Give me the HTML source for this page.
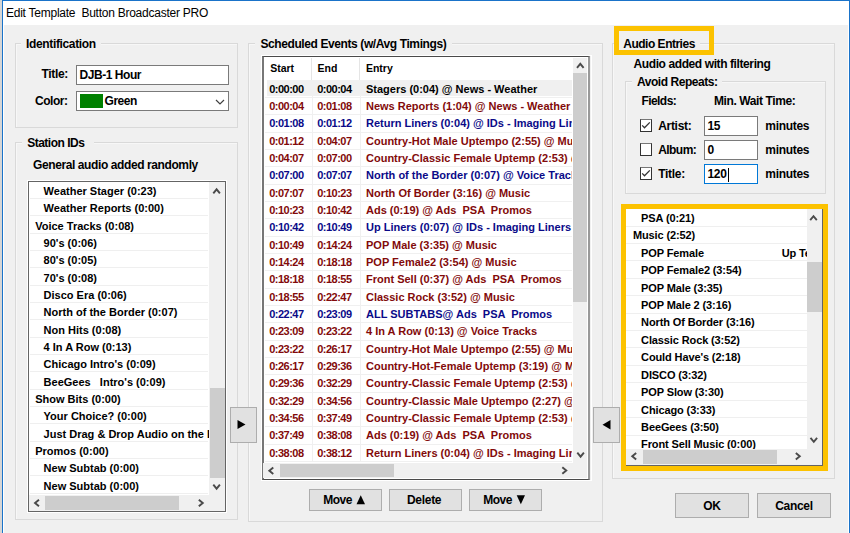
<!DOCTYPE html><html><head><meta charset="utf-8"><style>
html,body{margin:0;padding:0;}
body{width:850px;height:533px;position:relative;overflow:hidden;background:#f0f0f0;font-family:"Liberation Sans",sans-serif;}
.t{position:absolute;white-space:pre;}
div{box-sizing:border-box;}
</style></head><body>
<div style="position:absolute;left:0px;top:0px;width:2px;height:533px;background:#d6d6d6"></div>
<div style="position:absolute;left:2px;top:0px;width:848px;height:533px;background:#1a73c9"></div>
<div style="position:absolute;left:3px;top:1px;width:846px;height:533px;background:#ffffff"></div>
<div style="position:absolute;left:4px;top:25px;width:844px;height:508px;background:#f0f0f0"></div>
<div class="t" style="left:6px;top:6.64px;font-size:12px;line-height:12px;font-weight:normal;color:#000;letter-spacing:-0.25px;">Edit Template  Button Broadcaster PRO</div>
<div style="position:absolute;left:15px;top:43px;width:223px;height:85px;border:1px solid #d9d9d9;box-shadow:inset 1px 1px 0 #f7f7f7;box-sizing:border-box"></div>
<div style="position:absolute;left:21px;top:36px;width:80px;height:12px;background:#f0f0f0"></div>
<div class="t" style="left:26px;top:38.04px;font-size:12px;line-height:12px;font-weight:bold;color:#000;letter-spacing:-0.35px;">Identification</div>
<div class="t" style="left:41.4px;top:68.44px;font-size:12px;line-height:12px;font-weight:bold;color:#000;letter-spacing:-0.3px;">Title:</div>
<div class="t" style="left:35.0px;top:95.14px;font-size:12px;line-height:12px;font-weight:bold;color:#000;letter-spacing:-0.45px;">Color:</div>
<div style="position:absolute;left:76px;top:65px;width:153px;height:20px;background:#fff;border:1px solid #7a7a7a"></div>
<div class="t" style="left:79.5px;top:69.04px;font-size:12px;line-height:12px;font-weight:bold;color:#000;letter-spacing:-0.45px;">DJB-1 Hour</div>
<div style="position:absolute;left:76px;top:91px;width:153px;height:20px;background:#fff;border:1px solid #7a7a7a"></div>
<div style="position:absolute;left:80px;top:94px;width:23px;height:14px;background:#008000"></div>
<div class="t" style="left:104.5px;top:95.04px;font-size:12px;line-height:12px;font-weight:bold;color:#000;letter-spacing:-0.45px;">Green</div>
<svg style="position:absolute;left:0;top:0;overflow:visible" width="1" height="1"><polyline points="216,100 220,104 224,100" fill="none" stroke="#404040" stroke-width="1.2"/></svg>
<div style="position:absolute;left:15px;top:142px;width:223px;height:378px;border:1px solid #d9d9d9;box-shadow:inset 1px 1px 0 #f7f7f7;box-sizing:border-box"></div>
<div style="position:absolute;left:22px;top:134px;width:72px;height:14px;background:#f0f0f0"></div>
<div class="t" style="left:27.2px;top:136.64px;font-size:12px;line-height:12px;font-weight:bold;color:#000;letter-spacing:-0.5px;">Station IDs</div>
<div class="t" style="left:33px;top:158.54px;font-size:12px;line-height:12px;font-weight:bold;color:#000;letter-spacing:-0.4px;">General audio added randomly</div>
<div style="position:absolute;left:27px;top:180px;width:200px;height:333px;border:1px solid #fff"></div>
<div style="position:absolute;left:28px;top:181px;width:198px;height:331px;background:#fff;border:1px solid #646464"></div>
<div style="position:absolute;left:29px;top:182px;width:180px;height:313px;overflow:hidden">
<div style="position:absolute;left:1px;top:15.93px;width:178px;height:1px;background:#efefef"></div>
<div class="t" style="left:14.600000000000001px;top:4.08px;font-size:11px;line-height:11px;font-weight:bold;color:#000">Weather Stager (0:23)</div>
<div style="position:absolute;left:1px;top:33.26px;width:178px;height:1px;background:#efefef"></div>
<div class="t" style="left:14.600000000000001px;top:21.41px;font-size:11px;line-height:11px;font-weight:bold;color:#000">Weather Reports (0:00)</div>
<div style="position:absolute;left:1px;top:50.59px;width:178px;height:1px;background:#efefef"></div>
<div class="t" style="left:6.200000000000003px;top:38.74px;font-size:11px;line-height:11px;font-weight:bold;color:#000">Voice Tracks (0:08)</div>
<div style="position:absolute;left:1px;top:67.92px;width:178px;height:1px;background:#efefef"></div>
<div class="t" style="left:14.600000000000001px;top:56.07px;font-size:11px;line-height:11px;font-weight:bold;color:#000">90&#x27;s (0:06)</div>
<div style="position:absolute;left:1px;top:85.25px;width:178px;height:1px;background:#efefef"></div>
<div class="t" style="left:14.600000000000001px;top:73.40px;font-size:11px;line-height:11px;font-weight:bold;color:#000">80&#x27;s (0:05)</div>
<div style="position:absolute;left:1px;top:102.58px;width:178px;height:1px;background:#efefef"></div>
<div class="t" style="left:14.600000000000001px;top:90.73px;font-size:11px;line-height:11px;font-weight:bold;color:#000">70&#x27;s (0:08)</div>
<div style="position:absolute;left:1px;top:119.91px;width:178px;height:1px;background:#efefef"></div>
<div class="t" style="left:14.600000000000001px;top:108.06px;font-size:11px;line-height:11px;font-weight:bold;color:#000">Disco Era (0:06)</div>
<div style="position:absolute;left:1px;top:137.24px;width:178px;height:1px;background:#efefef"></div>
<div class="t" style="left:14.600000000000001px;top:125.39px;font-size:11px;line-height:11px;font-weight:bold;color:#000">North of the Border (0:07)</div>
<div style="position:absolute;left:1px;top:154.57px;width:178px;height:1px;background:#efefef"></div>
<div class="t" style="left:14.600000000000001px;top:142.72px;font-size:11px;line-height:11px;font-weight:bold;color:#000">Non Hits (0:08)</div>
<div style="position:absolute;left:1px;top:171.90px;width:178px;height:1px;background:#efefef"></div>
<div class="t" style="left:14.600000000000001px;top:160.05px;font-size:11px;line-height:11px;font-weight:bold;color:#000">4 In A Row (0:13)</div>
<div style="position:absolute;left:1px;top:189.23px;width:178px;height:1px;background:#efefef"></div>
<div class="t" style="left:14.600000000000001px;top:177.38px;font-size:11px;line-height:11px;font-weight:bold;color:#000">Chicago Intro&#x27;s (0:09)</div>
<div style="position:absolute;left:1px;top:206.56px;width:178px;height:1px;background:#efefef"></div>
<div class="t" style="left:14.600000000000001px;top:194.71px;font-size:11px;line-height:11px;font-weight:bold;color:#000">BeeGees   Intro&#x27;s (0:09)</div>
<div style="position:absolute;left:1px;top:223.89px;width:178px;height:1px;background:#efefef"></div>
<div class="t" style="left:6.200000000000003px;top:212.04px;font-size:11px;line-height:11px;font-weight:bold;color:#000">Show Bits (0:00)</div>
<div style="position:absolute;left:1px;top:241.22px;width:178px;height:1px;background:#efefef"></div>
<div class="t" style="left:14.600000000000001px;top:229.37px;font-size:11px;line-height:11px;font-weight:bold;color:#000">Your Choice? (0:00)</div>
<div style="position:absolute;left:1px;top:258.55px;width:178px;height:1px;background:#efefef"></div>
<div class="t" style="left:14.600000000000001px;top:246.70px;font-size:11px;line-height:11px;font-weight:bold;color:#000">Just Drag &amp; Drop Audio on the Board</div>
<div style="position:absolute;left:1px;top:275.88px;width:178px;height:1px;background:#efefef"></div>
<div class="t" style="left:6.200000000000003px;top:264.03px;font-size:11px;line-height:11px;font-weight:bold;color:#000">Promos (0:00)</div>
<div style="position:absolute;left:1px;top:293.21px;width:178px;height:1px;background:#efefef"></div>
<div class="t" style="left:14.600000000000001px;top:281.36px;font-size:11px;line-height:11px;font-weight:bold;color:#000">New Subtab (0:00)</div>
<div style="position:absolute;left:1px;top:310.54px;width:178px;height:1px;background:#efefef"></div>
<div class="t" style="left:14.600000000000001px;top:298.69px;font-size:11px;line-height:11px;font-weight:bold;color:#000">New Subtab (0:00)</div>
</div>
<div style="position:absolute;left:209px;top:182px;width:16px;height:313px;background:#f0f0f0"></div>
<div style="position:absolute;left:209.5px;top:388.3px;width:15px;height:89.5px;background:#cdcdcd"></div>
<svg style="position:absolute;left:0;top:0;overflow:visible" width="1" height="1"><polyline points="213.29999999999998,193.28 216.6,189.32000000000002 219.9,193.28" fill="none" stroke="#4a4a4a" stroke-width="1.9"/></svg>
<svg style="position:absolute;left:0;top:0;overflow:visible" width="1" height="1"><polyline points="213.29999999999998,484.71999999999997 216.6,488.68 219.9,484.71999999999997" fill="none" stroke="#4a4a4a" stroke-width="1.9"/></svg>
<div style="position:absolute;left:29px;top:495px;width:180px;height:16px;background:#f0f0f0"></div>
<div style="position:absolute;left:45.3px;top:496px;width:134px;height:14px;background:#cdcdcd"></div>
<svg style="position:absolute;left:0;top:0;overflow:visible" width="1" height="1"><polyline points="38.98,499.7 35.02,503 38.98,506.3" fill="none" stroke="#4a4a4a" stroke-width="1.9"/></svg>
<svg style="position:absolute;left:0;top:0;overflow:visible" width="1" height="1"><polyline points="198.82000000000002,499.7 202.78,503 198.82000000000002,506.3" fill="none" stroke="#4a4a4a" stroke-width="1.9"/></svg>
<div style="position:absolute;left:209px;top:495px;width:16px;height:16px;background:#f0f0f0"></div>
<div style="position:absolute;left:248px;top:43px;width:355px;height:479px;border:1px solid #d9d9d9;box-shadow:inset 1px 1px 0 #f7f7f7;box-sizing:border-box"></div>
<div style="position:absolute;left:255px;top:36px;width:197px;height:14px;background:#f0f0f0"></div>
<div class="t" style="left:260.4px;top:38.24px;font-size:12px;line-height:12px;font-weight:bold;color:#000;letter-spacing:-0.4px;">Scheduled Events (w/Avg Timings)</div>
<div style="position:absolute;left:261px;top:55px;width:331px;height:426px;border:1px solid #fff"></div>
<div style="position:absolute;left:262px;top:56px;width:328px;height:424px;background:#fff;border-top:1px solid #4a4a4a;border-bottom:1px solid #4a4a4a;border-left:2px solid #777;border-right:2px solid #999"></div>
<div class="t" style="left:270.2px;top:63.21px;font-size:10.5px;line-height:10.5px;font-weight:bold;color:#000;letter-spacing:0px;">Start</div>
<div class="t" style="left:317.6px;top:63.21px;font-size:10.5px;line-height:10.5px;font-weight:bold;color:#000;letter-spacing:0px;">End</div>
<div class="t" style="left:365.9px;top:63.21px;font-size:10.5px;line-height:10.5px;font-weight:bold;color:#000;letter-spacing:0px;">Entry</div>
<div style="position:absolute;left:311px;top:58px;width:1px;height:22px;background:#e5e5e5"></div>
<div style="position:absolute;left:359px;top:58px;width:1px;height:22px;background:#e5e5e5"></div>
<div style="position:absolute;left:263px;top:80px;width:309px;height:382.6px;overflow:hidden">
<div style="position:absolute;left:4px;top:0.10px;width:306px;height:16px;background:#f0f0f0"></div>
<div style="position:absolute;left:2px;top:16.93px;width:308px;height:1px;background:#f0f0f0"></div>
<div style="position:absolute;left:49px;top:0.10px;width:1px;height:17.33px;background:#f0f0f0"></div>
<div style="position:absolute;left:97px;top:0.10px;width:1px;height:17.33px;background:#f0f0f0"></div>
<div class="t" style="left:6.199999999999989px;top:3.78px;font-size:11px;line-height:11px;font-weight:bold;color:#000;letter-spacing:-0.5px">0:00:00</div>
<div class="t" style="left:54.19999999999999px;top:3.78px;font-size:11px;line-height:11px;font-weight:bold;color:#000;letter-spacing:-0.5px">0:00:04</div>
<div class="t" style="left:103px;top:3.78px;font-size:11px;line-height:11px;font-weight:bold;color:#000">Stagers (0:04) @ News - Weather</div>
<div style="position:absolute;left:2px;top:34.26px;width:308px;height:1px;background:#f0f0f0"></div>
<div style="position:absolute;left:49px;top:17.43px;width:1px;height:17.33px;background:#f0f0f0"></div>
<div style="position:absolute;left:97px;top:17.43px;width:1px;height:17.33px;background:#f0f0f0"></div>
<div class="t" style="left:6.199999999999989px;top:21.11px;font-size:11px;line-height:11px;font-weight:bold;color:#820a0a;letter-spacing:-0.5px">0:00:04</div>
<div class="t" style="left:54.19999999999999px;top:21.11px;font-size:11px;line-height:11px;font-weight:bold;color:#820a0a;letter-spacing:-0.5px">0:01:08</div>
<div class="t" style="left:103px;top:21.11px;font-size:11px;line-height:11px;font-weight:bold;color:#820a0a">News Reports (1:04) @ News - Weather</div>
<div style="position:absolute;left:2px;top:51.59px;width:308px;height:1px;background:#f0f0f0"></div>
<div style="position:absolute;left:49px;top:34.76px;width:1px;height:17.33px;background:#f0f0f0"></div>
<div style="position:absolute;left:97px;top:34.76px;width:1px;height:17.33px;background:#f0f0f0"></div>
<div class="t" style="left:6.199999999999989px;top:38.44px;font-size:11px;line-height:11px;font-weight:bold;color:#0a0a88;letter-spacing:-0.5px">0:01:08</div>
<div class="t" style="left:54.19999999999999px;top:38.44px;font-size:11px;line-height:11px;font-weight:bold;color:#0a0a88;letter-spacing:-0.5px">0:01:12</div>
<div class="t" style="left:103px;top:38.44px;font-size:11px;line-height:11px;font-weight:bold;color:#0a0a88">Return Liners (0:04) @ IDs - Imaging Liners</div>
<div style="position:absolute;left:2px;top:68.92px;width:308px;height:1px;background:#f0f0f0"></div>
<div style="position:absolute;left:49px;top:52.09px;width:1px;height:17.33px;background:#f0f0f0"></div>
<div style="position:absolute;left:97px;top:52.09px;width:1px;height:17.33px;background:#f0f0f0"></div>
<div class="t" style="left:6.199999999999989px;top:55.77px;font-size:11px;line-height:11px;font-weight:bold;color:#820a0a;letter-spacing:-0.5px">0:01:12</div>
<div class="t" style="left:54.19999999999999px;top:55.77px;font-size:11px;line-height:11px;font-weight:bold;color:#820a0a;letter-spacing:-0.5px">0:04:07</div>
<div class="t" style="left:103px;top:55.77px;font-size:11px;line-height:11px;font-weight:bold;color:#820a0a">Country-Hot Male Uptempo (2:55) @ Music</div>
<div style="position:absolute;left:2px;top:86.25px;width:308px;height:1px;background:#f0f0f0"></div>
<div style="position:absolute;left:49px;top:69.42px;width:1px;height:17.33px;background:#f0f0f0"></div>
<div style="position:absolute;left:97px;top:69.42px;width:1px;height:17.33px;background:#f0f0f0"></div>
<div class="t" style="left:6.199999999999989px;top:73.10px;font-size:11px;line-height:11px;font-weight:bold;color:#820a0a;letter-spacing:-0.5px">0:04:07</div>
<div class="t" style="left:54.19999999999999px;top:73.10px;font-size:11px;line-height:11px;font-weight:bold;color:#820a0a;letter-spacing:-0.5px">0:07:00</div>
<div class="t" style="left:103px;top:73.10px;font-size:11px;line-height:11px;font-weight:bold;color:#820a0a">Country-Classic Female Uptemp (2:53) @ Music</div>
<div style="position:absolute;left:2px;top:103.58px;width:308px;height:1px;background:#f0f0f0"></div>
<div style="position:absolute;left:49px;top:86.75px;width:1px;height:17.33px;background:#f0f0f0"></div>
<div style="position:absolute;left:97px;top:86.75px;width:1px;height:17.33px;background:#f0f0f0"></div>
<div class="t" style="left:6.199999999999989px;top:90.43px;font-size:11px;line-height:11px;font-weight:bold;color:#0a0a88;letter-spacing:-0.5px">0:07:00</div>
<div class="t" style="left:54.19999999999999px;top:90.43px;font-size:11px;line-height:11px;font-weight:bold;color:#0a0a88;letter-spacing:-0.5px">0:07:07</div>
<div class="t" style="left:103px;top:90.43px;font-size:11px;line-height:11px;font-weight:bold;color:#0a0a88">North of the Border (0:07) @ Voice Tracks</div>
<div style="position:absolute;left:2px;top:120.91px;width:308px;height:1px;background:#f0f0f0"></div>
<div style="position:absolute;left:49px;top:104.08px;width:1px;height:17.33px;background:#f0f0f0"></div>
<div style="position:absolute;left:97px;top:104.08px;width:1px;height:17.33px;background:#f0f0f0"></div>
<div class="t" style="left:6.199999999999989px;top:107.76px;font-size:11px;line-height:11px;font-weight:bold;color:#820a0a;letter-spacing:-0.5px">0:07:07</div>
<div class="t" style="left:54.19999999999999px;top:107.76px;font-size:11px;line-height:11px;font-weight:bold;color:#820a0a;letter-spacing:-0.5px">0:10:23</div>
<div class="t" style="left:103px;top:107.76px;font-size:11px;line-height:11px;font-weight:bold;color:#820a0a">North Of Border (3:16) @ Music</div>
<div style="position:absolute;left:2px;top:138.24px;width:308px;height:1px;background:#f0f0f0"></div>
<div style="position:absolute;left:49px;top:121.41px;width:1px;height:17.33px;background:#f0f0f0"></div>
<div style="position:absolute;left:97px;top:121.41px;width:1px;height:17.33px;background:#f0f0f0"></div>
<div class="t" style="left:6.199999999999989px;top:125.09px;font-size:11px;line-height:11px;font-weight:bold;color:#820a0a;letter-spacing:-0.5px">0:10:23</div>
<div class="t" style="left:54.19999999999999px;top:125.09px;font-size:11px;line-height:11px;font-weight:bold;color:#820a0a;letter-spacing:-0.5px">0:10:42</div>
<div class="t" style="left:103px;top:125.09px;font-size:11px;line-height:11px;font-weight:bold;color:#820a0a">Ads (0:19) @ Ads  PSA  Promos</div>
<div style="position:absolute;left:2px;top:155.57px;width:308px;height:1px;background:#f0f0f0"></div>
<div style="position:absolute;left:49px;top:138.74px;width:1px;height:17.33px;background:#f0f0f0"></div>
<div style="position:absolute;left:97px;top:138.74px;width:1px;height:17.33px;background:#f0f0f0"></div>
<div class="t" style="left:6.199999999999989px;top:142.42px;font-size:11px;line-height:11px;font-weight:bold;color:#0a0a88;letter-spacing:-0.5px">0:10:42</div>
<div class="t" style="left:54.19999999999999px;top:142.42px;font-size:11px;line-height:11px;font-weight:bold;color:#0a0a88;letter-spacing:-0.5px">0:10:49</div>
<div class="t" style="left:103px;top:142.42px;font-size:11px;line-height:11px;font-weight:bold;color:#0a0a88">Up Liners (0:07) @ IDs - Imaging Liners</div>
<div style="position:absolute;left:2px;top:172.90px;width:308px;height:1px;background:#f0f0f0"></div>
<div style="position:absolute;left:49px;top:156.07px;width:1px;height:17.33px;background:#f0f0f0"></div>
<div style="position:absolute;left:97px;top:156.07px;width:1px;height:17.33px;background:#f0f0f0"></div>
<div class="t" style="left:6.199999999999989px;top:159.75px;font-size:11px;line-height:11px;font-weight:bold;color:#820a0a;letter-spacing:-0.5px">0:10:49</div>
<div class="t" style="left:54.19999999999999px;top:159.75px;font-size:11px;line-height:11px;font-weight:bold;color:#820a0a;letter-spacing:-0.5px">0:14:24</div>
<div class="t" style="left:103px;top:159.75px;font-size:11px;line-height:11px;font-weight:bold;color:#820a0a">POP Male (3:35) @ Music</div>
<div style="position:absolute;left:2px;top:190.23px;width:308px;height:1px;background:#f0f0f0"></div>
<div style="position:absolute;left:49px;top:173.40px;width:1px;height:17.33px;background:#f0f0f0"></div>
<div style="position:absolute;left:97px;top:173.40px;width:1px;height:17.33px;background:#f0f0f0"></div>
<div class="t" style="left:6.199999999999989px;top:177.08px;font-size:11px;line-height:11px;font-weight:bold;color:#820a0a;letter-spacing:-0.5px">0:14:24</div>
<div class="t" style="left:54.19999999999999px;top:177.08px;font-size:11px;line-height:11px;font-weight:bold;color:#820a0a;letter-spacing:-0.5px">0:18:18</div>
<div class="t" style="left:103px;top:177.08px;font-size:11px;line-height:11px;font-weight:bold;color:#820a0a">POP Female2 (3:54) @ Music</div>
<div style="position:absolute;left:2px;top:207.56px;width:308px;height:1px;background:#f0f0f0"></div>
<div style="position:absolute;left:49px;top:190.73px;width:1px;height:17.33px;background:#f0f0f0"></div>
<div style="position:absolute;left:97px;top:190.73px;width:1px;height:17.33px;background:#f0f0f0"></div>
<div class="t" style="left:6.199999999999989px;top:194.41px;font-size:11px;line-height:11px;font-weight:bold;color:#820a0a;letter-spacing:-0.5px">0:18:18</div>
<div class="t" style="left:54.19999999999999px;top:194.41px;font-size:11px;line-height:11px;font-weight:bold;color:#820a0a;letter-spacing:-0.5px">0:18:55</div>
<div class="t" style="left:103px;top:194.41px;font-size:11px;line-height:11px;font-weight:bold;color:#820a0a">Front Sell (0:37) @ Ads  PSA  Promos</div>
<div style="position:absolute;left:2px;top:224.89px;width:308px;height:1px;background:#f0f0f0"></div>
<div style="position:absolute;left:49px;top:208.06px;width:1px;height:17.33px;background:#f0f0f0"></div>
<div style="position:absolute;left:97px;top:208.06px;width:1px;height:17.33px;background:#f0f0f0"></div>
<div class="t" style="left:6.199999999999989px;top:211.74px;font-size:11px;line-height:11px;font-weight:bold;color:#820a0a;letter-spacing:-0.5px">0:18:55</div>
<div class="t" style="left:54.19999999999999px;top:211.74px;font-size:11px;line-height:11px;font-weight:bold;color:#820a0a;letter-spacing:-0.5px">0:22:47</div>
<div class="t" style="left:103px;top:211.74px;font-size:11px;line-height:11px;font-weight:bold;color:#820a0a">Classic Rock (3:52) @ Music</div>
<div style="position:absolute;left:2px;top:242.22px;width:308px;height:1px;background:#f0f0f0"></div>
<div style="position:absolute;left:49px;top:225.39px;width:1px;height:17.33px;background:#f0f0f0"></div>
<div style="position:absolute;left:97px;top:225.39px;width:1px;height:17.33px;background:#f0f0f0"></div>
<div class="t" style="left:6.199999999999989px;top:229.07px;font-size:11px;line-height:11px;font-weight:bold;color:#0a0a88;letter-spacing:-0.5px">0:22:47</div>
<div class="t" style="left:54.19999999999999px;top:229.07px;font-size:11px;line-height:11px;font-weight:bold;color:#0a0a88;letter-spacing:-0.5px">0:23:09</div>
<div class="t" style="left:103px;top:229.07px;font-size:11px;line-height:11px;font-weight:bold;color:#0a0a88">ALL SUBTABS@ Ads  PSA  Promos</div>
<div style="position:absolute;left:2px;top:259.55px;width:308px;height:1px;background:#f0f0f0"></div>
<div style="position:absolute;left:49px;top:242.72px;width:1px;height:17.33px;background:#f0f0f0"></div>
<div style="position:absolute;left:97px;top:242.72px;width:1px;height:17.33px;background:#f0f0f0"></div>
<div class="t" style="left:6.199999999999989px;top:246.40px;font-size:11px;line-height:11px;font-weight:bold;color:#820a0a;letter-spacing:-0.5px">0:23:09</div>
<div class="t" style="left:54.19999999999999px;top:246.40px;font-size:11px;line-height:11px;font-weight:bold;color:#820a0a;letter-spacing:-0.5px">0:23:22</div>
<div class="t" style="left:103px;top:246.40px;font-size:11px;line-height:11px;font-weight:bold;color:#820a0a">4 In A Row (0:13) @ Voice Tracks</div>
<div style="position:absolute;left:2px;top:276.88px;width:308px;height:1px;background:#f0f0f0"></div>
<div style="position:absolute;left:49px;top:260.05px;width:1px;height:17.33px;background:#f0f0f0"></div>
<div style="position:absolute;left:97px;top:260.05px;width:1px;height:17.33px;background:#f0f0f0"></div>
<div class="t" style="left:6.199999999999989px;top:263.73px;font-size:11px;line-height:11px;font-weight:bold;color:#820a0a;letter-spacing:-0.5px">0:23:22</div>
<div class="t" style="left:54.19999999999999px;top:263.73px;font-size:11px;line-height:11px;font-weight:bold;color:#820a0a;letter-spacing:-0.5px">0:26:17</div>
<div class="t" style="left:103px;top:263.73px;font-size:11px;line-height:11px;font-weight:bold;color:#820a0a">Country-Hot Male Uptempo (2:55) @ Music</div>
<div style="position:absolute;left:2px;top:294.21px;width:308px;height:1px;background:#f0f0f0"></div>
<div style="position:absolute;left:49px;top:277.38px;width:1px;height:17.33px;background:#f0f0f0"></div>
<div style="position:absolute;left:97px;top:277.38px;width:1px;height:17.33px;background:#f0f0f0"></div>
<div class="t" style="left:6.199999999999989px;top:281.06px;font-size:11px;line-height:11px;font-weight:bold;color:#820a0a;letter-spacing:-0.5px">0:26:17</div>
<div class="t" style="left:54.19999999999999px;top:281.06px;font-size:11px;line-height:11px;font-weight:bold;color:#820a0a;letter-spacing:-0.5px">0:29:36</div>
<div class="t" style="left:103px;top:281.06px;font-size:11px;line-height:11px;font-weight:bold;color:#820a0a">Country-Hot-Female Uptemp (3:19) @ Music</div>
<div style="position:absolute;left:2px;top:311.54px;width:308px;height:1px;background:#f0f0f0"></div>
<div style="position:absolute;left:49px;top:294.71px;width:1px;height:17.33px;background:#f0f0f0"></div>
<div style="position:absolute;left:97px;top:294.71px;width:1px;height:17.33px;background:#f0f0f0"></div>
<div class="t" style="left:6.199999999999989px;top:298.39px;font-size:11px;line-height:11px;font-weight:bold;color:#820a0a;letter-spacing:-0.5px">0:29:36</div>
<div class="t" style="left:54.19999999999999px;top:298.39px;font-size:11px;line-height:11px;font-weight:bold;color:#820a0a;letter-spacing:-0.5px">0:32:29</div>
<div class="t" style="left:103px;top:298.39px;font-size:11px;line-height:11px;font-weight:bold;color:#820a0a">Country-Classic Female Uptemp (2:53) @ Music</div>
<div style="position:absolute;left:2px;top:328.87px;width:308px;height:1px;background:#f0f0f0"></div>
<div style="position:absolute;left:49px;top:312.04px;width:1px;height:17.33px;background:#f0f0f0"></div>
<div style="position:absolute;left:97px;top:312.04px;width:1px;height:17.33px;background:#f0f0f0"></div>
<div class="t" style="left:6.199999999999989px;top:315.72px;font-size:11px;line-height:11px;font-weight:bold;color:#820a0a;letter-spacing:-0.5px">0:32:29</div>
<div class="t" style="left:54.19999999999999px;top:315.72px;font-size:11px;line-height:11px;font-weight:bold;color:#820a0a;letter-spacing:-0.5px">0:34:56</div>
<div class="t" style="left:103px;top:315.72px;font-size:11px;line-height:11px;font-weight:bold;color:#820a0a">Country-Classic Male Uptempo (2:27) @ Music</div>
<div style="position:absolute;left:2px;top:346.20px;width:308px;height:1px;background:#f0f0f0"></div>
<div style="position:absolute;left:49px;top:329.37px;width:1px;height:17.33px;background:#f0f0f0"></div>
<div style="position:absolute;left:97px;top:329.37px;width:1px;height:17.33px;background:#f0f0f0"></div>
<div class="t" style="left:6.199999999999989px;top:333.05px;font-size:11px;line-height:11px;font-weight:bold;color:#820a0a;letter-spacing:-0.5px">0:34:56</div>
<div class="t" style="left:54.19999999999999px;top:333.05px;font-size:11px;line-height:11px;font-weight:bold;color:#820a0a;letter-spacing:-0.5px">0:37:49</div>
<div class="t" style="left:103px;top:333.05px;font-size:11px;line-height:11px;font-weight:bold;color:#820a0a">Country-Classic Female Uptemp (2:53) @ Music</div>
<div style="position:absolute;left:2px;top:363.53px;width:308px;height:1px;background:#f0f0f0"></div>
<div style="position:absolute;left:49px;top:346.70px;width:1px;height:17.33px;background:#f0f0f0"></div>
<div style="position:absolute;left:97px;top:346.70px;width:1px;height:17.33px;background:#f0f0f0"></div>
<div class="t" style="left:6.199999999999989px;top:350.38px;font-size:11px;line-height:11px;font-weight:bold;color:#820a0a;letter-spacing:-0.5px">0:37:49</div>
<div class="t" style="left:54.19999999999999px;top:350.38px;font-size:11px;line-height:11px;font-weight:bold;color:#820a0a;letter-spacing:-0.5px">0:38:08</div>
<div class="t" style="left:103px;top:350.38px;font-size:11px;line-height:11px;font-weight:bold;color:#820a0a">Ads (0:19) @ Ads  PSA  Promos</div>
<div style="position:absolute;left:2px;top:380.86px;width:308px;height:1px;background:#f0f0f0"></div>
<div style="position:absolute;left:49px;top:364.03px;width:1px;height:17.33px;background:#f0f0f0"></div>
<div style="position:absolute;left:97px;top:364.03px;width:1px;height:17.33px;background:#f0f0f0"></div>
<div class="t" style="left:6.199999999999989px;top:367.71px;font-size:11px;line-height:11px;font-weight:bold;color:#820a0a;letter-spacing:-0.5px">0:38:08</div>
<div class="t" style="left:54.19999999999999px;top:367.71px;font-size:11px;line-height:11px;font-weight:bold;color:#820a0a;letter-spacing:-0.5px">0:38:12</div>
<div class="t" style="left:103px;top:367.71px;font-size:11px;line-height:11px;font-weight:bold;color:#820a0a">Return Liners (0:04) @ IDs - Imaging Liners</div>
</div>
<div style="position:absolute;left:573px;top:58px;width:14px;height:404.6px;background:#f0f0f0"></div>
<div style="position:absolute;left:573px;top:73.3px;width:14px;height:228.4px;background:#cdcdcd"></div>
<svg style="position:absolute;left:0;top:0;overflow:visible" width="1" height="1"><polyline points="577.0,67.78 580.3,63.82 583.5999999999999,67.78" fill="none" stroke="#4a4a4a" stroke-width="1.9"/></svg>
<svg style="position:absolute;left:0;top:0;overflow:visible" width="1" height="1"><polyline points="577.3000000000001,452.71999999999997 580.6,456.68 583.9,452.71999999999997" fill="none" stroke="#4a4a4a" stroke-width="1.9"/></svg>
<div style="position:absolute;left:263px;top:462.6px;width:310px;height:15.4px;background:#f0f0f0"></div>
<div style="position:absolute;left:279.5px;top:463.6px;width:114.3px;height:13.4px;background:#cdcdcd"></div>
<svg style="position:absolute;left:0;top:0;overflow:visible" width="1" height="1"><polyline points="273.28000000000003,467.4 269.32,470.7 273.28000000000003,474.0" fill="none" stroke="#4a4a4a" stroke-width="1.9"/></svg>
<svg style="position:absolute;left:0;top:0;overflow:visible" width="1" height="1"><polyline points="562.3199999999999,467.2 566.28,470.5 562.3199999999999,473.8" fill="none" stroke="#4a4a4a" stroke-width="1.9"/></svg>
<div style="position:absolute;left:573px;top:462.6px;width:14px;height:15.4px;background:#f0f0f0"></div>
<div style="position:absolute;left:309px;top:489px;width:73px;height:22px;background:#e1e1e1;border:1px solid #adadad"></div>
<div class="t" style="left:323.3px;top:494.04px;font-size:12px;line-height:12px;font-weight:bold;color:#000;letter-spacing:-0.5px;">Move</div>
<svg style="position:absolute;left:0;top:0;overflow:visible" width="1" height="1"><polygon points="356.5,504.2 360.75,495.2 365,504.2" fill="#000"/></svg>
<div style="position:absolute;left:389px;top:489px;width:73px;height:22px;background:#e1e1e1;border:1px solid #adadad"></div>
<div class="t" style="left:407.0px;top:494.04px;font-size:12px;line-height:12px;font-weight:bold;color:#000;letter-spacing:-0.3px;">Delete</div>
<div style="position:absolute;left:469px;top:489px;width:73px;height:22px;background:#e1e1e1;border:1px solid #adadad"></div>
<div class="t" style="left:483.3px;top:494.04px;font-size:12px;line-height:12px;font-weight:bold;color:#000;letter-spacing:-0.5px;">Move</div>
<svg style="position:absolute;left:0;top:0;overflow:visible" width="1" height="1"><polygon points="516.7,495.2 520.85,504.2 525,495.2" fill="#000"/></svg>
<div style="position:absolute;left:612px;top:43px;width:223px;height:436px;border:1px solid #d9d9d9;box-shadow:inset 1px 1px 0 #f7f7f7;box-sizing:border-box"></div>
<div style="position:absolute;left:619px;top:36px;width:81px;height:14px;background:#f0f0f0"></div>
<div class="t" style="left:623.3px;top:37.54px;font-size:12px;line-height:12px;font-weight:bold;color:#000;letter-spacing:-0.5px;">Audio Entries</div>
<div style="position:absolute;left:614px;top:26px;width:100px;height:29px;border:5px solid #fcc200"></div>
<div class="t" style="left:633.5px;top:57.84px;font-size:12px;line-height:12px;font-weight:bold;color:#000;letter-spacing:-0.4px;">Audio added with filtering</div>
<div style="position:absolute;left:625px;top:81px;width:201px;height:113px;border:1px solid #d9d9d9;box-shadow:inset 1px 1px 0 #f7f7f7;box-sizing:border-box"></div>
<div style="position:absolute;left:632px;top:74px;width:90px;height:14px;background:#f0f0f0"></div>
<div class="t" style="left:637px;top:75.54px;font-size:12px;line-height:12px;font-weight:bold;color:#000;letter-spacing:-0.45px;">Avoid Repeats:</div>
<div class="t" style="left:641.4px;top:94.64px;font-size:12px;line-height:12px;font-weight:bold;color:#000;letter-spacing:-0.55px;">Fields:</div>
<div class="t" style="left:714px;top:94.64px;font-size:12px;line-height:12px;font-weight:bold;color:#000;letter-spacing:-0.4px;">Min. Wait Time:</div>
<div style="position:absolute;left:640px;top:119px;width:12px;height:13px;background:#fff;border:1px solid #333;border-top-color:#777"></div>
<svg style="position:absolute;left:0;top:0;overflow:visible" width="1" height="1"><polyline points="642.2,125.4 644.5,127.8 649.8,122.4" fill="none" stroke="#333" stroke-width="1.3"/></svg>
<div class="t" style="left:658.2px;top:120.44px;font-size:12px;line-height:12px;font-weight:bold;color:#000;letter-spacing:-0.3px;">Artist:</div>
<div style="position:absolute;left:704px;top:116px;width:54px;height:20px;background:#fff;border:1px solid #7a7a7a"></div>
<div class="t" style="left:707.5px;top:120.44px;font-size:12px;line-height:12px;font-weight:bold;color:#000;letter-spacing:-0.3px;">15</div>
<div class="t" style="left:765.3px;top:120.04px;font-size:12px;line-height:12px;font-weight:bold;color:#000;letter-spacing:-0.3px;">minutes</div>
<div style="position:absolute;left:640px;top:143px;width:12px;height:13px;background:#fff;border:1px solid #333;border-top-color:#777"></div>
<div class="t" style="left:658.2px;top:144.44px;font-size:12px;line-height:12px;font-weight:bold;color:#000;letter-spacing:-0.55px;">Album:</div>
<div style="position:absolute;left:704px;top:140px;width:54px;height:20px;background:#fff;border:1px solid #7a7a7a"></div>
<div class="t" style="left:707.5px;top:144.44px;font-size:12px;line-height:12px;font-weight:bold;color:#000;letter-spacing:-0.3px;">0</div>
<div class="t" style="left:765.3px;top:144.04px;font-size:12px;line-height:12px;font-weight:bold;color:#000;letter-spacing:-0.3px;">minutes</div>
<div style="position:absolute;left:640px;top:167px;width:12px;height:13px;background:#fff;border:1px solid #333;border-top-color:#777"></div>
<svg style="position:absolute;left:0;top:0;overflow:visible" width="1" height="1"><polyline points="642.2,173.4 644.5,175.8 649.8,170.4" fill="none" stroke="#333" stroke-width="1.3"/></svg>
<div class="t" style="left:658.2px;top:168.44px;font-size:12px;line-height:12px;font-weight:bold;color:#000;letter-spacing:-0.3px;">Title:</div>
<div style="position:absolute;left:704px;top:164px;width:54px;height:20px;background:#fff;border:1px solid #0078d7"></div>
<div class="t" style="left:707.5px;top:168.44px;font-size:12px;line-height:12px;font-weight:bold;color:#000;letter-spacing:-0.3px;">120</div>
<div class="t" style="left:765.3px;top:168.04px;font-size:12px;line-height:12px;font-weight:bold;color:#000;letter-spacing:-0.3px;">minutes</div>
<div style="position:absolute;left:727.5px;top:168px;width:1px;height:14px;background:#000"></div>
<div style="position:absolute;left:621px;top:204px;width:202px;height:262px;background:#fff;border:1px solid #646464"></div>
<div style="position:absolute;left:626px;top:209px;width:181px;height:240px;overflow:hidden">
<div style="position:absolute;left:0px;top:16.53px;width:181px;height:1px;background:#efefef"></div>
<div class="t" style="left:15.100000000000023px;top:3.88px;font-size:11px;line-height:11px;font-weight:bold;color:#000;letter-spacing:-0.12px">PSA (0:21)</div>
<div style="position:absolute;left:0px;top:33.95px;width:181px;height:1px;background:#efefef"></div>
<div class="t" style="left:6.899999999999977px;top:21.30px;font-size:11px;line-height:11px;font-weight:bold;color:#000;letter-spacing:-0.12px">Music (2:52)</div>
<div style="position:absolute;left:0px;top:51.37px;width:181px;height:1px;background:#efefef"></div>
<div class="t" style="left:15.100000000000023px;top:38.72px;font-size:11px;line-height:11px;font-weight:bold;color:#000;letter-spacing:-0.12px">POP Female</div>
<div class="t" style="left:155.70000000000005px;top:38.72px;font-size:11px;line-height:11px;font-weight:bold;color:#000;letter-spacing:-0.12px">Up Tempo</div>
<div style="position:absolute;left:0px;top:68.79px;width:181px;height:1px;background:#efefef"></div>
<div class="t" style="left:15.100000000000023px;top:56.14px;font-size:11px;line-height:11px;font-weight:bold;color:#000;letter-spacing:-0.12px">POP Female2 (3:54)</div>
<div style="position:absolute;left:0px;top:86.21px;width:181px;height:1px;background:#efefef"></div>
<div class="t" style="left:15.100000000000023px;top:73.56px;font-size:11px;line-height:11px;font-weight:bold;color:#000;letter-spacing:-0.12px">POP Male (3:35)</div>
<div style="position:absolute;left:0px;top:103.63px;width:181px;height:1px;background:#efefef"></div>
<div class="t" style="left:15.100000000000023px;top:90.98px;font-size:11px;line-height:11px;font-weight:bold;color:#000;letter-spacing:-0.12px">POP Male 2 (3:16)</div>
<div style="position:absolute;left:0px;top:121.05px;width:181px;height:1px;background:#efefef"></div>
<div class="t" style="left:15.100000000000023px;top:108.40px;font-size:11px;line-height:11px;font-weight:bold;color:#000;letter-spacing:-0.12px">North Of Border (3:16)</div>
<div style="position:absolute;left:0px;top:138.47px;width:181px;height:1px;background:#efefef"></div>
<div class="t" style="left:15.100000000000023px;top:125.82px;font-size:11px;line-height:11px;font-weight:bold;color:#000;letter-spacing:-0.12px">Classic Rock (3:52)</div>
<div style="position:absolute;left:0px;top:155.89px;width:181px;height:1px;background:#efefef"></div>
<div class="t" style="left:15.100000000000023px;top:143.24px;font-size:11px;line-height:11px;font-weight:bold;color:#000;letter-spacing:-0.12px">Could Have&#x27;s (2:18)</div>
<div style="position:absolute;left:0px;top:173.31px;width:181px;height:1px;background:#efefef"></div>
<div class="t" style="left:15.100000000000023px;top:160.66px;font-size:11px;line-height:11px;font-weight:bold;color:#000;letter-spacing:-0.12px">DISCO (3:32)</div>
<div style="position:absolute;left:0px;top:190.73px;width:181px;height:1px;background:#efefef"></div>
<div class="t" style="left:15.100000000000023px;top:178.08px;font-size:11px;line-height:11px;font-weight:bold;color:#000;letter-spacing:-0.12px">POP Slow (3:30)</div>
<div style="position:absolute;left:0px;top:208.15px;width:181px;height:1px;background:#efefef"></div>
<div class="t" style="left:15.100000000000023px;top:195.50px;font-size:11px;line-height:11px;font-weight:bold;color:#000;letter-spacing:-0.12px">Chicago (3:33)</div>
<div style="position:absolute;left:0px;top:225.57px;width:181px;height:1px;background:#efefef"></div>
<div class="t" style="left:15.100000000000023px;top:212.92px;font-size:11px;line-height:11px;font-weight:bold;color:#000;letter-spacing:-0.12px">BeeGees (3:50)</div>
<div style="position:absolute;left:0px;top:242.99px;width:181px;height:1px;background:#efefef"></div>
<div class="t" style="left:15.100000000000023px;top:230.34px;font-size:11px;line-height:11px;font-weight:bold;color:#000;letter-spacing:-0.12px">Front Sell Music (0:00)</div>
</div>
<div style="position:absolute;left:807px;top:209px;width:15px;height:240px;background:#f0f0f0"></div>
<div style="position:absolute;left:807px;top:261.8px;width:15px;height:50px;background:#cdcdcd"></div>
<svg style="position:absolute;left:0;top:0;overflow:visible" width="1" height="1"><polyline points="810.2,220.17999999999998 813.5,216.22 816.8,220.17999999999998" fill="none" stroke="#4a4a4a" stroke-width="1.9"/></svg>
<svg style="position:absolute;left:0;top:0;overflow:visible" width="1" height="1"><polyline points="810.5,437.82 813.8,441.78000000000003 817.0999999999999,437.82" fill="none" stroke="#4a4a4a" stroke-width="1.9"/></svg>
<div style="position:absolute;left:626px;top:449px;width:181px;height:15.5px;background:#f0f0f0"></div>
<div style="position:absolute;left:642.8px;top:450px;width:134px;height:13.5px;background:#cdcdcd"></div>
<svg style="position:absolute;left:0;top:0;overflow:visible" width="1" height="1"><polyline points="636.1800000000001,453.0 632.22,456.3 636.1800000000001,459.6" fill="none" stroke="#4a4a4a" stroke-width="1.9"/></svg>
<svg style="position:absolute;left:0;top:0;overflow:visible" width="1" height="1"><polyline points="795.8199999999999,453.0 799.78,456.3 795.8199999999999,459.6" fill="none" stroke="#4a4a4a" stroke-width="1.9"/></svg>
<div style="position:absolute;left:807px;top:449px;width:15px;height:15.5px;background:#f0f0f0"></div>
<div style="position:absolute;left:621px;top:204px;width:207px;height:267px;border:5px solid #fcc200"></div>
<div style="position:absolute;left:230px;top:407px;width:27px;height:36px;background:#e1e1e1;border:1px solid #adadad"></div>
<svg style="position:absolute;left:0;top:0;overflow:visible" width="1" height="1"><polygon points="237.5,420 245.5,424.5 237.5,429" fill="#000"/></svg>
<div style="position:absolute;left:593px;top:407px;width:27px;height:36px;background:#e1e1e1;border:1px solid #adadad"></div>
<svg style="position:absolute;left:0;top:0;overflow:visible" width="1" height="1"><polygon points="610.5,420 602.5,424.8 610.5,429.5" fill="#000"/></svg>
<div style="position:absolute;left:675px;top:493px;width:74px;height:25px;background:#e1e1e1;border:1px solid #adadad"></div>
<div class="t" style="left:675px;top:494px;width:74px;height:25px;line-height:25px;text-align:center;font-size:12px;font-weight:bold;letter-spacing:-0.3px">OK</div>
<div style="position:absolute;left:757px;top:493px;width:74px;height:25px;background:#e1e1e1;border:1px solid #adadad"></div>
<div class="t" style="left:757px;top:494px;width:74px;height:25px;line-height:25px;text-align:center;font-size:12px;font-weight:bold;letter-spacing:-0.3px">Cancel</div>
</body></html>
